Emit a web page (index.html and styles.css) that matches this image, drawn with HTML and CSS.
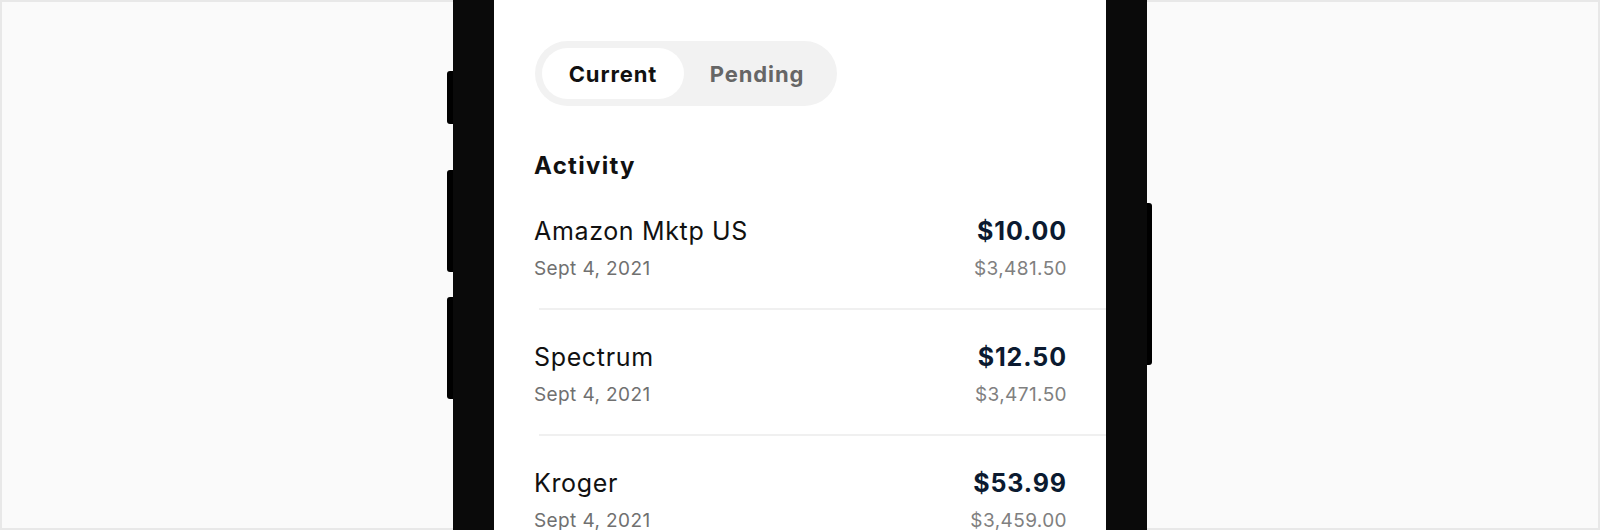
FILE: index.html
```html
<!DOCTYPE html>
<html lang="en">
<head>
<meta charset="utf-8">
<title>Activity</title>
<link rel="stylesheet" href="styles.css">
</head>
<body>
<div class="page">
  <div class="phone">
    <span class="btn btn-l1"></span>
    <span class="btn btn-l2"></span>
    <span class="btn btn-l3"></span>
    <span class="btn btn-r1"></span>
    <div class="screen">
      <div class="toggle">
        <div class="seg seg-active">Current</div>
        <div class="seg">Pending</div>
      </div>
      <h2 class="heading">Activity</h2>
      <ul class="list">
        <li class="row">
          <div class="row-main">
            <span class="name">Amazon Mktp US</span>
            <span class="amount">$10.00</span>
          </div>
          <div class="row-sub">
            <span class="date">Sept 4, 2021</span>
            <span class="balance">$3,481.50</span>
          </div>
        </li>
        <li class="divider"></li>
        <li class="row">
          <div class="row-main">
            <span class="name">Spectrum</span>
            <span class="amount">$12.50</span>
          </div>
          <div class="row-sub">
            <span class="date">Sept 4, 2021</span>
            <span class="balance">$3,471.50</span>
          </div>
        </li>
        <li class="divider"></li>
        <li class="row">
          <div class="row-main">
            <span class="name">Kroger</span>
            <span class="amount">$53.99</span>
          </div>
          <div class="row-sub">
            <span class="date">Sept 4, 2021</span>
            <span class="balance">$3,459.00</span>
          </div>
        </li>
      </ul>
    </div>
  </div>
</div>
</body>
</html>
```
FILE: styles.css
```css
* { box-sizing: border-box; }
html, body { margin: 0; padding: 0; }
body {
  font-family: Inter, "Noto Sans", "Liberation Sans", sans-serif;
  background: #fafafa;
}
.page {
  width: 1600px;
  height: 530px;
  overflow: hidden;
  background: #fafafa;
  box-shadow: inset 0 0 0 2px #e8e8e8;
  display: flex;
  justify-content: center;
}
.phone {
  position: relative;
  width: 694px;
  height: 600px;
  background: #0a0a0a;
  padding: 0 41px;
}
.btn {
  position: absolute;
  width: 6px;
  background: #000;
}
.btn-l1 { left: -6px; top: 71px; height: 53px; border-radius: 3px 0 0 3px; }
.btn-l2 { left: -6px; top: 170px; height: 102px; border-radius: 3px 0 0 3px; }
.btn-l3 { left: -6px; top: 297px; height: 102px; border-radius: 3px 0 0 3px; }
.btn-r1 { right: -5px; width: 5px; top: 203px; height: 162px; border-radius: 0 3px 3px 0; }
.screen {
  width: 612px;
  height: 100%;
  background: #fff;
  padding-top: 41px;
}
.toggle {
  margin-left: 41px;
  width: 302px;
  height: 65px;
  border-radius: 33px;
  background: #f2f2f2;
  padding: 7px;
  display: flex;
}
.seg {
  width: 142px;
  height: 51px;
  border-radius: 26px;
  display: flex;
  align-items: center;
  justify-content: center;
  font-size: 22px;
  font-weight: 700;
  letter-spacing: 0.9px;
  color: #666;
}
.seg + .seg { width: 146px; }
.seg-active {
  background: #fff;
  color: #111;
}
.heading {
  margin: 44px 0 2px 40px;
  font-size: 24px;
  line-height: 32px;
  font-weight: 700;
  letter-spacing: 1.3px;
  color: #111;
}
.list {
  list-style: none;
  margin: 0;
  padding: 0;
}
.row {
  padding: 32px 39px 27px 40px;
}
.row-main, .row-sub {
  display: flex;
  justify-content: space-between;
  align-items: baseline;
}
.row-sub { margin-top: 11px; }
.name {
  font-size: 25px;
  line-height: 30px;
  letter-spacing: 0.65px;
  color: #111;
}
.amount {
  font-size: 25px;
  line-height: 30px;
  font-weight: 700;
  letter-spacing: 0.9px;
  color: #0b1a30;
}
.date, .balance {
  font-size: 19px;
  line-height: 24px;
  letter-spacing: 0.4px;
}
.date { color: #707070; }
.balance { color: #808080; }
.divider {
  height: 2px;
  margin-left: 45px;
  background: #f0f0f0;
}
```
